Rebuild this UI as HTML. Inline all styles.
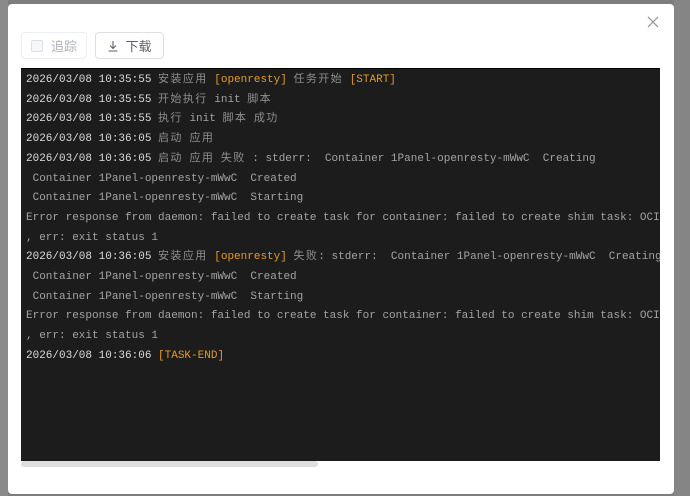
<!DOCTYPE html>
<html><head><meta charset="utf-8"><style>
*{margin:0;padding:0;box-sizing:border-box}
html,body{width:690px;height:496px;overflow:hidden;background:#7d7d7d;font-family:"Liberation Sans","Noto Sans CJK SC",sans-serif}
.bgl{position:absolute;left:0;top:0;width:8px;height:496px;background:#8a8a8a}
.bgr{position:absolute;left:674px;top:0;width:16px;height:496px;background:#858585}
.modal{position:absolute;left:8px;top:4px;width:666px;height:490px;background:#fff;border-radius:4px}
.close{position:absolute;left:647px;top:16px;width:12px;height:12px}
.btn{position:absolute;top:32px;height:27px;border:1px solid #dcdfe6;border-radius:4px;font-size:13px;color:#606266;display:flex;align-items:center}
.b1{left:21px;width:66px;color:#b0b3b8;border-color:#ebeef5}
.cb{width:12px;height:12px;border:1px solid #dcdfe6;background:#f5f7fa;border-radius:2px;margin:0 8px 0 9px}
.b2{left:95px;width:69px;justify-content:center}
.term{position:absolute;left:21px;top:68px;width:639px;height:393px;background:#1c1c1c;overflow:hidden;border-top:1px solid #000}
.sb{position:absolute;left:21px;top:461px;width:297px;height:6px;background:#dedede;border-radius:3px}
pre{font-family:"Liberation Mono","Noto Sans CJK SC",monospace;font-size:11px;line-height:19.7px;color:#a3a3a3;padding:2px 0 0 5px;white-space:pre}
.t{color:#dcdcdc}
.o{color:#e39a2a}
.c{color:#8e8e8e;letter-spacing:1.4px}
</style></head><body>
<div class="bgl"></div><div class="bgr"></div>
<div class="modal"></div>
<svg class="close" viewBox="0 0 12 12"><path d="M1 1L11 11M11 1L1 11" stroke="#909399" stroke-width="1.2"/></svg>
<div class="btn b1"><span class="cb"></span>追踪</div>
<div class="btn b2"><svg width="12" height="12" viewBox="0 0 12 12" style="margin-right:6px"><path d="M6 1V8M3 5.5L6 8.5L9 5.5M1.5 11H10.5" stroke="#606266" stroke-width="1.1" fill="none"/></svg>下载</div>
<div class="term"><pre><span class="t">2026/03/08 10:35:55</span> <span class="c">安装应用</span> <span class="o">[openresty]</span> <span class="c">任务开始</span> <span class="o">[START]</span>
<span class="t">2026/03/08 10:35:55</span> <span class="c">开始执行</span> init <span class="c">脚本</span>
<span class="t">2026/03/08 10:35:55</span> <span class="c">执行</span> init <span class="c">脚本</span> <span class="c">成功</span>
<span class="t">2026/03/08 10:36:05</span> <span class="c">启动</span> <span class="c">应用</span>
<span class="t">2026/03/08 10:36:05</span> <span class="c">启动</span> <span class="c">应用</span> <span class="c">失败</span> : stderr:  Container 1Panel-openresty-mWwC  Creating
 Container 1Panel-openresty-mWwC  Created
 Container 1Panel-openresty-mWwC  Starting
Error response from daemon: failed to create task for container: failed to create shim task: OCI runtime
, err: exit status 1
<span class="t">2026/03/08 10:36:05</span> <span class="c">安装应用</span> <span class="o">[openresty]</span> <span class="c">失败</span>: stderr:  Container 1Panel-openresty-mWwC  Creating
 Container 1Panel-openresty-mWwC  Created
 Container 1Panel-openresty-mWwC  Starting
Error response from daemon: failed to create task for container: failed to create shim task: OCI runtime
, err: exit status 1
<span class="t">2026/03/08 10:36:06</span> <span class="o">[TASK-END]</span></pre></div>
<div class="sb"></div>
</body></html>
